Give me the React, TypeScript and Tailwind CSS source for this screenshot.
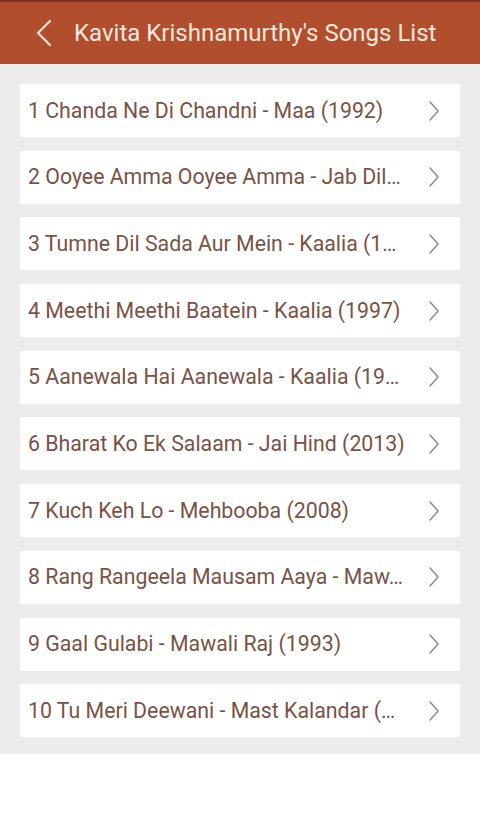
import React from "react";

const songs = [
  "1 Chanda Ne Di Chandni - Maa (1992)",
  "2 Ooyee Amma Ooyee Amma - Jab Dil…",
  "3 Tumne Dil Sada Aur Mein - Kaalia (1…",
  "4 Meethi Meethi Baatein - Kaalia (1997)",
  "5 Aanewala Hai Aanewala - Kaalia (19…",
  "6 Bharat Ko Ek Salaam - Jai Hind (2013)",
  "7 Kuch Keh Lo - Mehbooba (2008)",
  "8 Rang Rangeela Mausam Aaya - Maw…",
  "9 Gaal Gulabi - Mawali Raj (1993)",
  "10 Tu Meri Deewani - Mast Kalandar (…",
];

export default function App() {
  return (
    <div className="w-[480px] h-[821px] bg-white" style={{ fontFamily: "Roboto, 'Noto Sans', sans-serif" }}>
      <div className="h-[64px] bg-[#b04e2d] border-t-[2px] border-[#7d3322] flex items-center">
        <svg width="18" height="28" viewBox="0 0 18 28" className="ml-[35px]">
          <path d="M15 2 L3 14 L15 26" fill="none" stroke="#f3e2d6" strokeWidth="2.2" strokeLinecap="round" strokeLinejoin="round" />
        </svg>
        <div className="ml-[21px] text-[24px] text-[#f6e8de] leading-none whitespace-nowrap">Kavita Krishnamurthy's Songs List</div>
      </div>
      <div className="bg-[#ececec] pt-[20px] pb-[17px] px-[20px] flex flex-col gap-[13.7px]">
        {songs.map((s) => (
          <div key={s} className="h-[53px] bg-white flex items-center pl-[8px] pr-[20px]">
            <div className="flex-1 min-w-0 whitespace-nowrap overflow-visible text-[21.3px] text-[#7a5246]">{s}</div>
            <svg width="12" height="22" viewBox="0 0 12 22" className="shrink-0">
              <path d="M2 2 L10 11 L2 20" fill="none" stroke="#8a8a8a" strokeWidth="1.5" strokeLinecap="round" strokeLinejoin="round" />
            </svg>
          </div>
        ))}
      </div>
    </div>
  );
}
